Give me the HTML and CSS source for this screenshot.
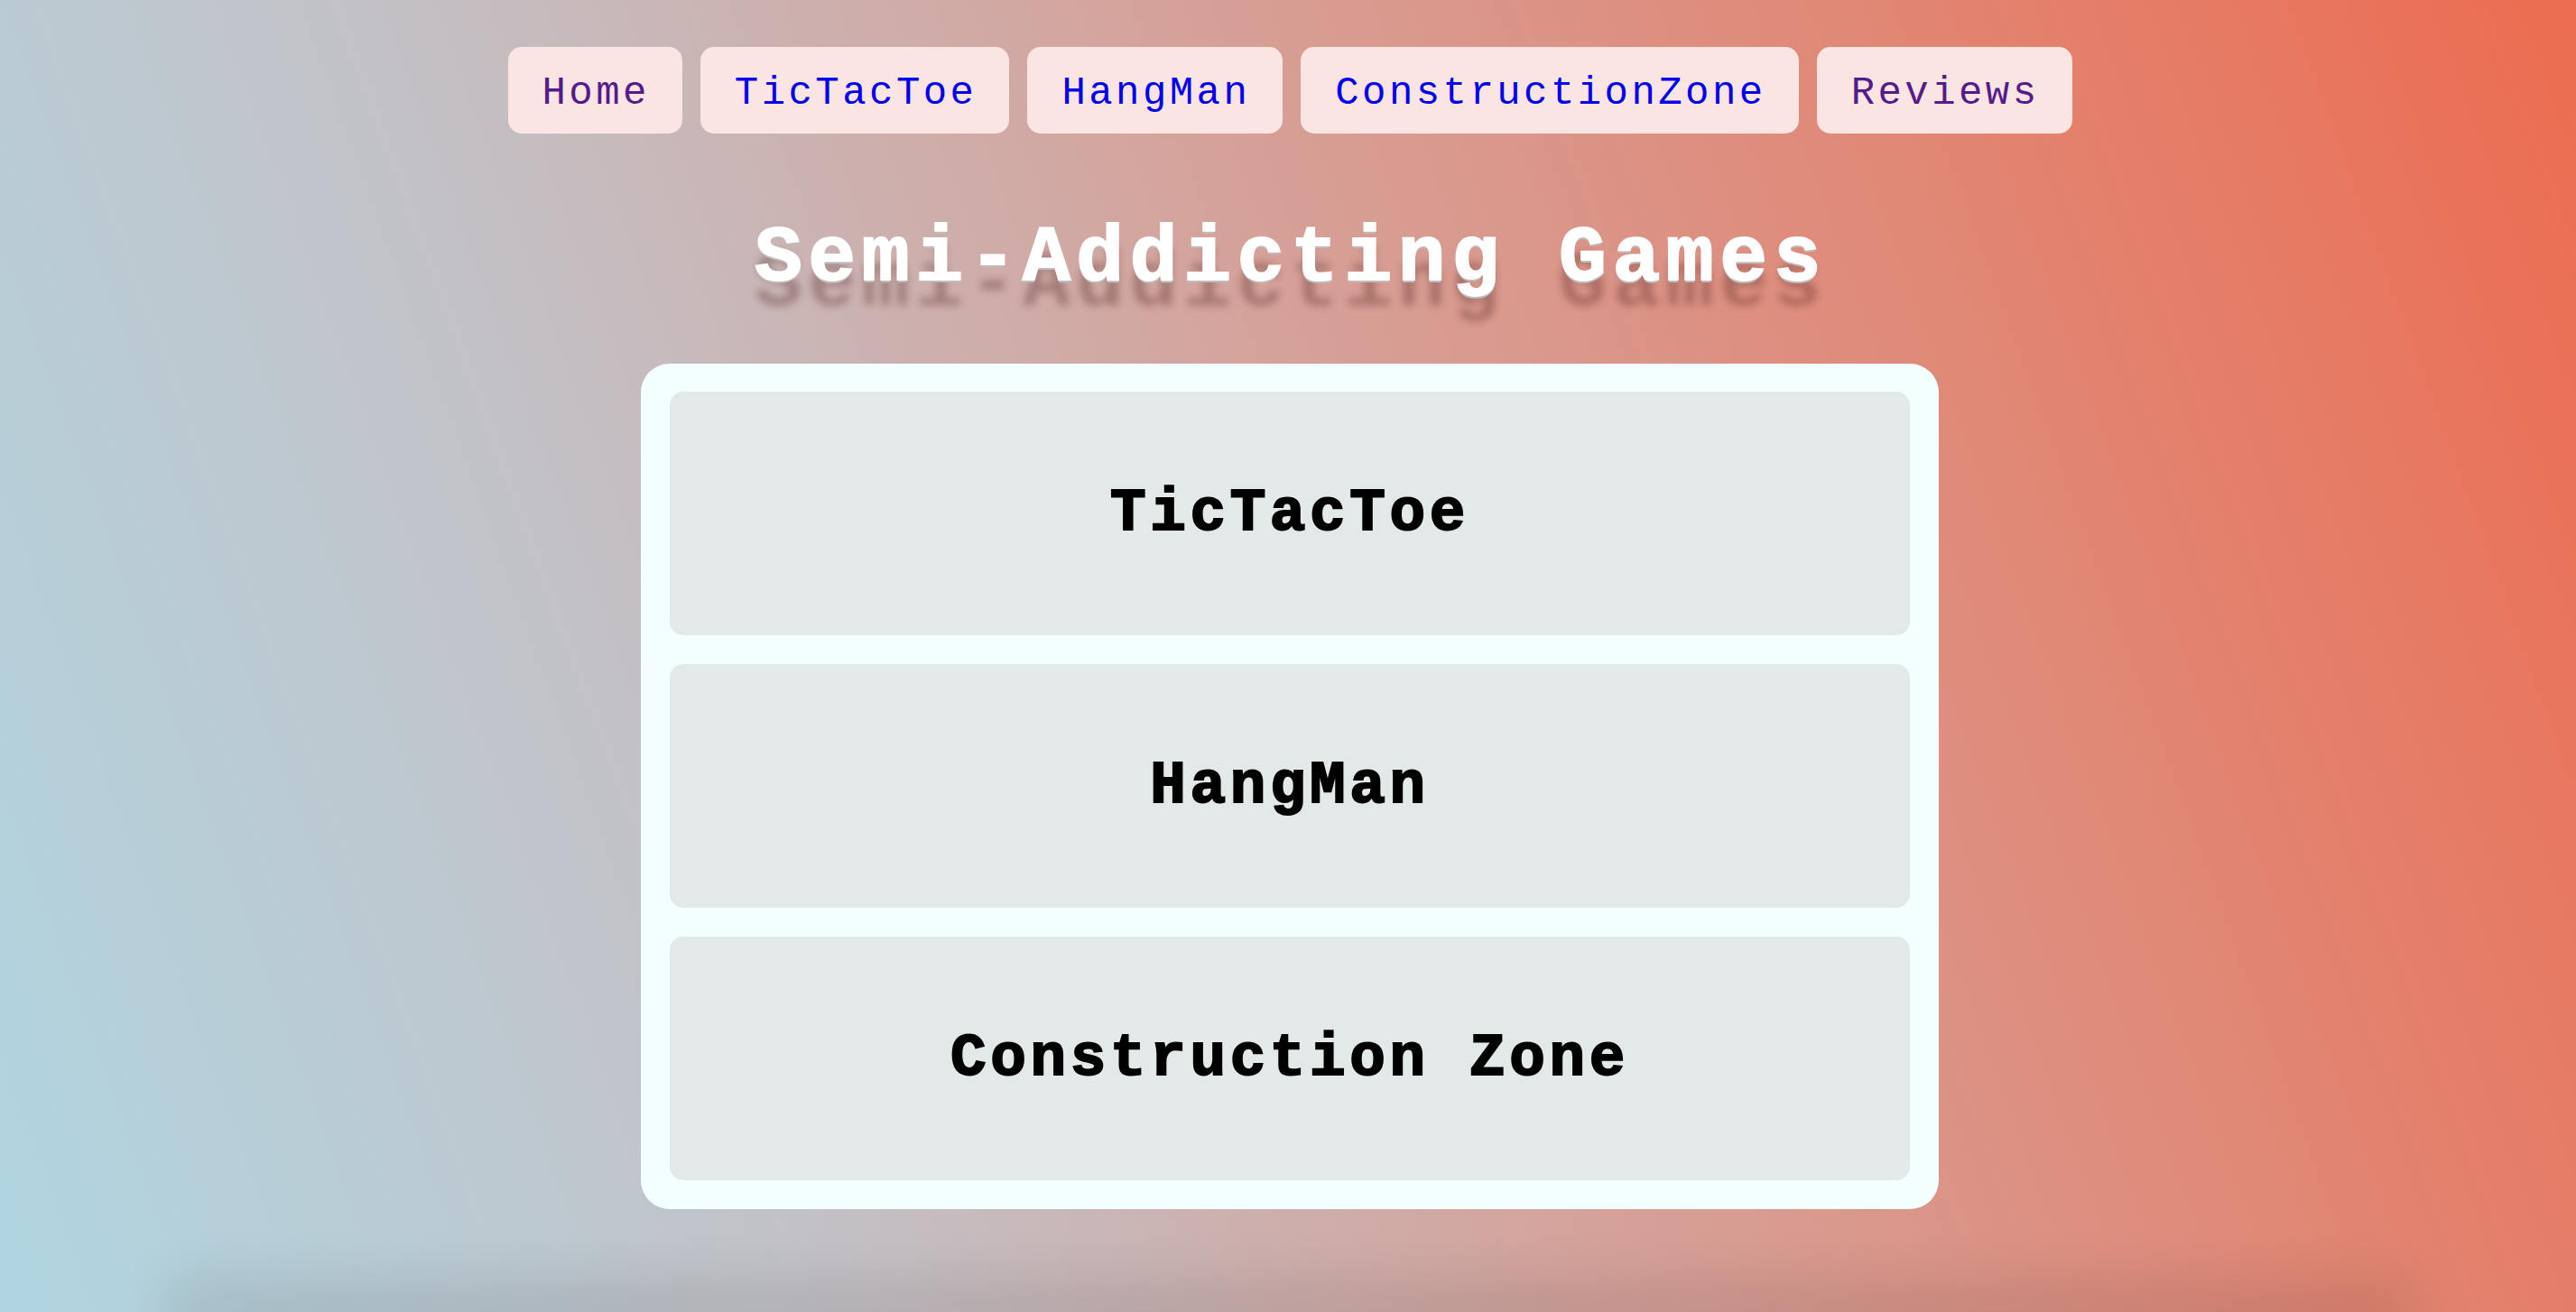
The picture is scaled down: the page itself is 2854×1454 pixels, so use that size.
FILE: index.html
```html
<!DOCTYPE html>
<html lang="en">
<head>
    <meta charset="UTF-8">
    <meta name="viewport" content="width=device-width, initial-scale=1.0">
    <title>Semi-Addicting Games</title>
    <link rel="stylesheet" href="styles.css">
</head>
<body>

    <nav class="menu">
        <a class="botao visitado" href="#">Home</a>
        <a class="botao" href="#">TicTacToe</a>
        <a class="botao" href="#">HangMan</a>
        <a class="botao" href="#">ConstructionZone</a>
        <a class="botao visitado" href="#">Reviews</a>
    </nav>

    <h1>Semi-Addicting Games</h1>

    <div class="jogos">
        <a class="jogo" href="#">TicTacToe</a>
        <a class="jogo" href="#">HangMan</a>
        <a class="jogo" href="#">Construction Zone</a>
    </div>

    <div class="rodape"></div>

</body>
</html>
```

FILE: styles.css
```css
html {
    height: 100%;
}

body {
    font-family: "Liberation Mono", "DejaVu Sans Mono", monospace;
    background: linear-gradient(70deg, #b0d6e2 0%, #c3c1c6 28%, #d6a097 55%, #ec6c50 100%);
    margin: 0;
    padding: 0;
    min-height: 100vh;
    display: flex;
    flex-direction: column;
    align-items: center;
    overflow: hidden;
}

.menu {
    display: flex;
    gap: 20px;
    margin-top: 52px;
    margin-left: 4px;
}

.botao {
    background-color: #fae5e3;
    border-radius: 15px;
    padding: 26px 36px 20px 38px;
    font-size: 44px;
    line-height: 50px;
    letter-spacing: 0.078em;
    color: #0000ee;
    text-decoration: none;
}

.botao.visitado {
    color: #551a8b;
}

h1 {
    color: #ffffff;
    font-size: 88px;
    line-height: 100px;
    letter-spacing: 0.075em;
    margin: 89px 0 66px 6px;
    -webkit-text-stroke: 2px #ffffff;
    text-shadow: 0 3px 0 #bcbcbc, 0 28px 9px rgba(70, 25, 25, 0.32);
}

.jogos {
    background-color: #f3fffe;
    border-radius: 32px;
    width: 1374px;
    padding: 31px 32px 32px 32px;
    margin-left: 4px;
    display: flex;
    flex-direction: column;
    gap: 32px;
}

.jogo {
    background-color: #e3e9e9;
    border-radius: 15px;
    height: 270px;
    display: flex;
    justify-content: center;
    align-items: center;
    font-size: 66px;
    font-weight: bold;
    letter-spacing: 0.07em;
    -webkit-text-stroke: 2px #000000;
    color: #000000;
    text-decoration: none;
}

.rodape {
    margin-top: auto;
    width: 85%;
    height: 0;
    box-shadow: 0 0 60px 30px rgba(40, 20, 20, 0.13);
}
```
